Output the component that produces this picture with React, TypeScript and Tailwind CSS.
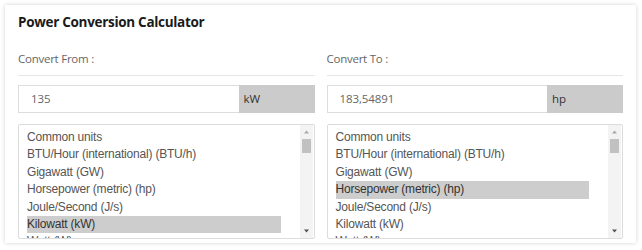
import React from "react";

const units = [
  "Common units",
  "BTU/Hour (international) (BTU/h)",
  "Gigawatt (GW)",
  "Horsepower (metric) (hp)",
  "Joule/Second (J/s)",
  "Kilowatt (kW)",
  "Watt (W)",
];

function UnitList({ selected }: { selected: string }) {
  return (
    <div className="mt-[11px] h-[115px] flex border border-[#dcdcdc] rounded-[2px] bg-white overflow-hidden">
      <ul className="flex-1 pt-[4px] pl-[8px] pr-[19px] font-['Liberation_Sans',Arial,sans-serif] text-[12px] tracking-[-0.2px] text-[#555]">
        {units.map((u) => (
          <li
            key={u}
            className={
              "h-[17.4px] leading-[17.4px] whitespace-nowrap " +
              (u === selected ? "bg-[#cdcdcd] text-[#333]" : "")
            }
          >
            {u}
          </li>
        ))}
      </ul>
      {/* fake scrollbar */}
      <div className="w-[13px] mr-[1px] bg-[#f3f3f3] flex flex-col items-center py-[3px]">
        <svg width="7" height="6" viewBox="0 0 7 6" className="mt-[1px]">
          <path d="M1 4.5 L3.5 1.5 L6 4.5 Z" fill="#a8a8a8" />
        </svg>
        <div className="mt-[4px] w-[9px] h-[14px] bg-[#c1c1c1]" />
        <div className="flex-1" />
        <svg width="7" height="6" viewBox="0 0 7 6" className="mb-[1px]">
          <path d="M1 1.5 L6 1.5 L3.5 4.5 Z" fill="#505050" />
        </svg>
      </div>
    </div>
  );
}

function Column({
  label,
  value,
  unit,
  selected,
}: {
  label: string;
  value: string;
  unit: string;
  selected: string;
}) {
  return (
    <div className="w-[299px]">
      <div className="h-[25px] border-b border-[#e6e6e6] text-[11.5px] tracking-[-0.25px] leading-[16px] text-[#666]">
        {label}
      </div>
      <div className="mt-[9px] flex h-[28px]">
        <div className="flex-1 border border-[#dddddd] border-r-0 bg-white pl-[12px] text-[11.5px] tracking-[-0.1px] leading-[26px] text-[#666]">
          {value}
        </div>
        <div className="w-[76px] bg-[#cbcbcb] pl-[5px] text-[11.5px] leading-[28px] text-[#333]">
          {unit}
        </div>
      </div>
      <UnitList selected={selected} />
    </div>
  );
}

export default function App() {
  return (
    <div className="w-[642px] h-[250px] bg-white p-[5px] font-['Open_Sans',sans-serif]">
      <div className="w-[631px] h-[238px] bg-white shadow-[0_0_4px_rgba(0,0,0,0.18)] pt-[8px] px-[13px]">
        <h1 className="text-[13.5px] tracking-[-0.3px] leading-[19px] font-bold text-[#1a1a1a]">
          Power Conversion Calculator
        </h1>
        <div className="mt-[19px] flex gap-[12px]">
          <Column label="Convert From :" value="135" unit="kW" selected="Kilowatt (kW)" />
          <Column
            label="Convert To :"
            value="183,54891"
            unit="hp"
            selected="Horsepower (metric) (hp)"
          />
        </div>
      </div>
    </div>
  );
}
